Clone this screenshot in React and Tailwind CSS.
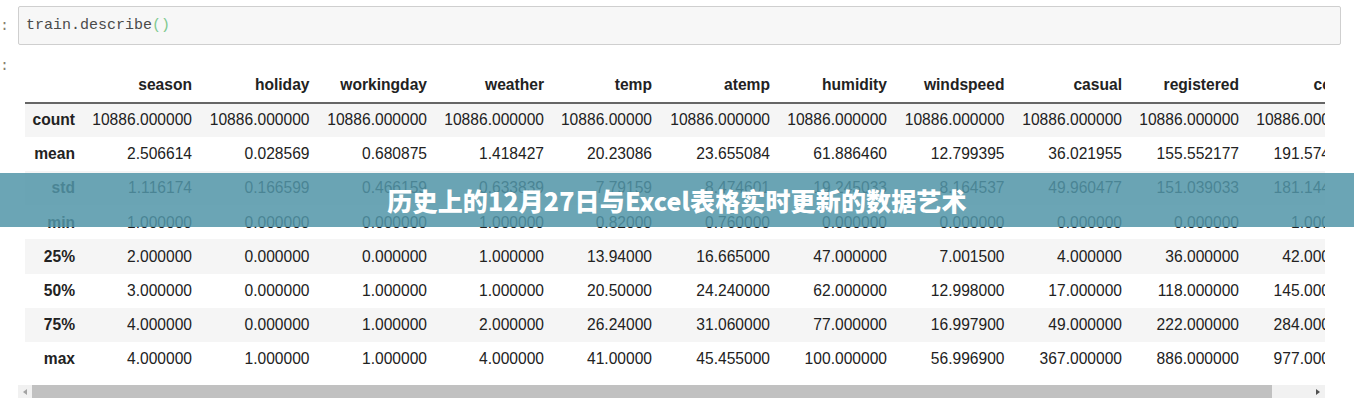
import React from 'react';

const columns = ['season', 'holiday', 'workingday', 'weather', 'temp', 'atemp', 'humidity', 'windspeed', 'casual', 'registered', 'count'];

const rows = [
    ['count', '10886.000000', '10886.000000', '10886.000000', '10886.000000', '10886.00000', '10886.000000', '10886.000000', '10886.000000', '10886.000000', '10886.000000', '10886.000000'],
    ['mean', '2.506614', '0.028569', '0.680875', '1.418427', '20.23086', '23.655084', '61.886460', '12.799395', '36.021955', '155.552177', '191.574132'],
    ['std', '1.116174', '0.166599', '0.466159', '0.633839', '7.79159', '8.474601', '19.245033', '8.164537', '49.960477', '151.039033', '181.144454'],
    ['min', '1.000000', '0.000000', '0.000000', '1.000000', '0.82000', '0.760000', '0.000000', '0.000000', '0.000000', '0.000000', '1.000000'],
    ['25%', '2.000000', '0.000000', '0.000000', '1.000000', '13.94000', '16.665000', '47.000000', '7.001500', '4.000000', '36.000000', '42.000000'],
    ['50%', '3.000000', '0.000000', '1.000000', '1.000000', '20.50000', '24.240000', '62.000000', '12.998000', '17.000000', '118.000000', '145.000000'],
    ['75%', '4.000000', '0.000000', '1.000000', '2.000000', '26.24000', '31.060000', '77.000000', '16.997900', '49.000000', '222.000000', '284.000000'],
    ['max', '4.000000', '1.000000', '1.000000', '4.000000', '41.00000', '45.455000', '100.000000', '56.996900', '367.000000', '886.000000', '977.000000'],
];

const App = () => {
    return (
        <div className="relative w-[1354px] h-[400px] overflow-hidden bg-white text-[#222] font-['Liberation_Sans',sans-serif]">
            {/* Input cell */}
            <div className="flex h-[68px] pt-[6px]">
                <div className="w-[18px] pt-[12px] font-['Liberation_Mono',monospace] text-[15px] leading-[18px] text-[#8a7f70]">:</div>
                <div className="w-[1323px] h-[39px] flex items-center pl-[7px] pt-[2px] bg-[#f7f7f7] border border-[#cfcfcf] rounded-[2px] font-['Liberation_Mono',monospace] text-[15px] text-[#4a4a4a]">
                    train.describe<span className="text-[#7fc98f]">()</span>
                </div>
            </div>

            {/* Output cell */}
            <div className="relative">
                <div className="absolute left-0 -top-[10px] font-['Liberation_Mono',monospace] text-[15px] leading-[18px] text-[#8a7f70]">:</div>
                <div className="ml-[25px] w-[1300px] overflow-hidden">
                    <table className="table-fixed w-[1331px] border-collapse text-[15.6px]">
                        <colgroup>
                            <col className="w-[50px]" />
                            <col className="w-[117px]" />
                            <col className="w-[117.5px]" />
                            <col className="w-[117.5px]" />
                            <col className="w-[117px]" />
                            <col className="w-[108px]" />
                            <col className="w-[118px]" />
                            <col className="w-[117px]" />
                            <col className="w-[117.5px]" />
                            <col className="w-[117.5px]" />
                            <col className="w-[117px]" />
                            <col className="w-[117px]" />
                        </colgroup>
                        <thead>
                            <tr className="h-[34.6px] border-b-2 border-[#666]">
                                <th></th>
                                {columns.map(col => (
                                    <th key={col} className="text-right font-bold whitespace-nowrap p-0">{col}</th>
                                ))}
                            </tr>
                        </thead>
                        <tbody>
                            {rows.map((row, i) => (
                                <tr key={row[0]} className={`h-[34.2px] ${i % 2 === 0 ? 'bg-[#f5f5f5]' : 'bg-white'}`}>
                                    {row.map((cell, j) => (
                                        <td key={j} className={`text-right whitespace-nowrap p-0 ${j === 0 ? 'font-bold' : ''}`}>{cell}</td>
                                    ))}
                                </tr>
                            ))}
                        </tbody>
                    </table>
                </div>
            </div>

            {/* Horizontal scrollbar */}
            <div className="flex items-stretch ml-[18px] mt-[9px] w-[1307px] h-[13px] bg-[#f1f1f1]">
                <div className="w-[14px] flex items-center justify-center">
                    <div className="w-0 h-0 border-y-[3px] border-y-transparent border-r-[4px] border-r-[#a3a3a3]"></div>
                </div>
                <div className="w-[1240px] bg-[#c1c1c1]"></div>
                <div className="flex-1 flex items-center justify-end pr-[5px]">
                    <div className="w-0 h-0 border-y-[3px] border-y-transparent border-l-[4px] border-l-[#505050]"></div>
                </div>
            </div>

            {/* Title banner over the screenshot */}
            <div className="absolute left-0 right-0 top-[173px] h-[54px] pt-[2px] flex items-center justify-center bg-[#5195a8]/85">
                <h1 className="text-white text-[25px] tracking-[0.15px] font-black whitespace-nowrap font-['Noto_Sans_CJK_SC','Noto_Sans',sans-serif]">历史上的12月27日与Excel表格实时更新的数据艺术</h1>
            </div>
        </div>
    );
};

export default App;
